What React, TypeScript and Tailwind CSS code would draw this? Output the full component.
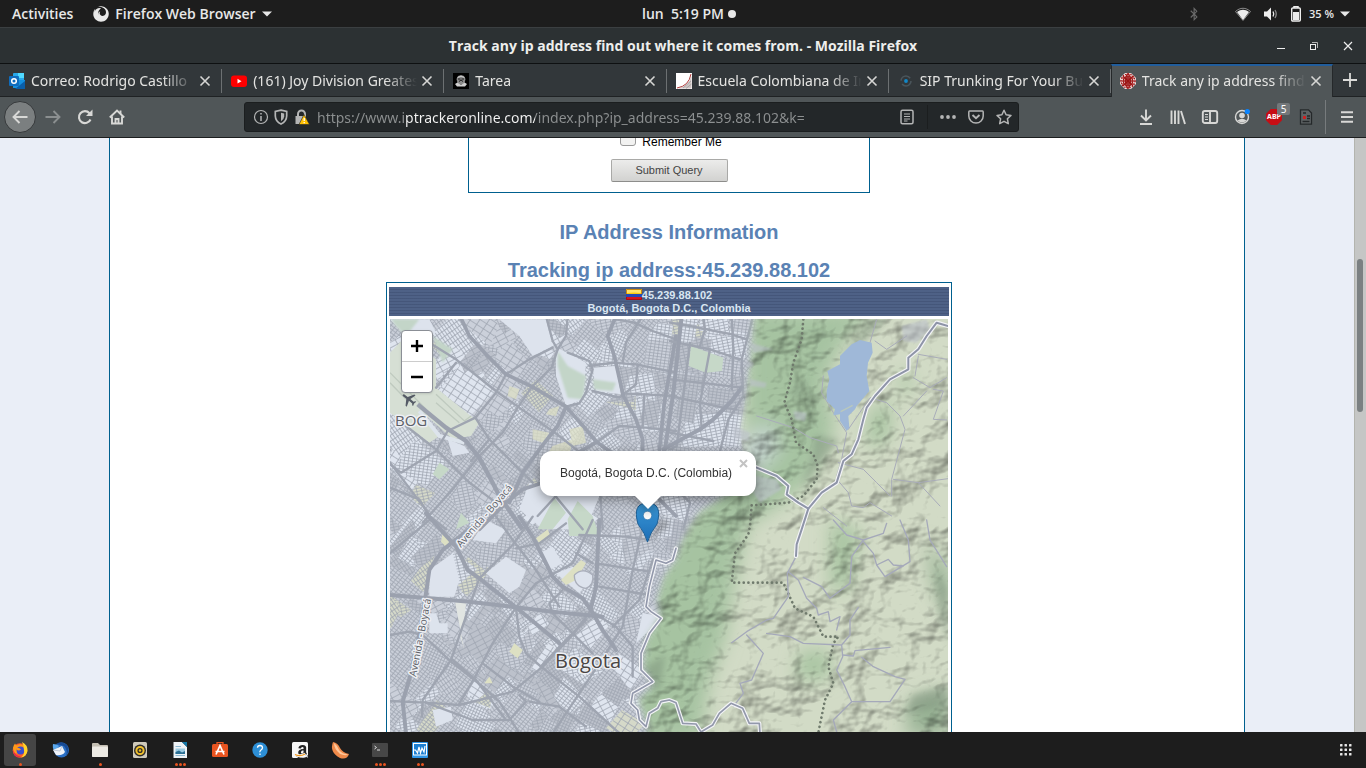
import type { ReactNode } from "react";
import { FaAmazon, FaBluetoothB, FaFirefox } from "react-icons/fa";

/* ---------- desktop top bar ---------- */

function TopBar() {
  return (
    <header className="grid h-[27px] shrink-0 grid-cols-3 items-center bg-[#1d1d1d] font-['Open_Sans','Noto_Sans',sans-serif] text-[14px] font-semibold leading-5 text-[#e8e8e8]">
      <div className="flex items-center">
        <button className="ml-3">Activities</button>
        <button className="ml-5 flex items-center gap-[6px]">
          <FaFirefox className="h-4 w-4" />
          <span>Firefox Web Browser</span>
          <Caret />
        </button>
      </div>
      <button className="flex items-center justify-center gap-1 pl-3">
        <span className="whitespace-pre">lun  5:19 PM</span>
        <span className="h-2 w-2 rounded-full bg-[#e8e8e8]" />
      </button>
      <button aria-label="System menu" className="flex items-center justify-end pr-4">
        <FaBluetoothB className="mr-9 h-[14px] w-[10px] text-[#6a6a6a]" />
        <svg className="mr-3 h-4 w-4" viewBox="0 0 16 16">
          <path d="M.5 5.5C5 1.200 11 1.200 15.500 5.500L8 14.500Z" fill="none" stroke="#8a8a8a" strokeWidth="1" />
          <path d="M2 6C6 3 10 3 14 6L8 14Z" fill="#eee" />
        </svg>
        <svg className="mr-3 h-4 w-4" viewBox="0 0 16 16">
          <path d="M1 5.500H4L8 1.500V14.500L4 10.500H1Z" fill="#eee" />
          <path d="M10 5.500Q11.500 8 10 10.500" fill="none" stroke="#eee" strokeWidth="1.300" />
          <path d="M12 4Q14.500 8 12 12" fill="none" stroke="#8a8a8a" strokeWidth="1.300" />
        </svg>
        <svg className="mr-2 h-4 w-[10px]" viewBox="0 0 10 16">
          <path d="M3 2V.8H7V2" fill="none" stroke="#eee" strokeWidth="1.500" />
          <rect x=".7" y="2" width="8.600" height="13" rx="1" fill="none" stroke="#eee" strokeWidth="1.400" />
          <rect x="2" y="6" width="6" height="8" fill="#eee" />
        </svg>
        <span className="mr-[6px] text-[11px]">35 %</span>
        <Caret />
      </button>
    </header>
  );
}

function Caret() {
  return (
    <svg className="h-[6px] w-[10px]" viewBox="0 0 10 6">
      <path d="M0 .5H10L5 5.500Z" fill="#e8e8e8" />
    </svg>
  );
}

function TitleBar() {
  return (
    <div className="grid h-[37px] shrink-0 grid-cols-[1fr_auto_1fr] items-center border-t border-b border-t-[#3b3f41] border-b-[#0e1011] bg-[#2c3133] text-[#eeeeec]">
      <span />
      <h1 className="font-['Open_Sans','Noto_Sans',sans-serif] text-[14px] leading-5 font-bold">
        Track any ip address find out where it comes from. - Mozilla Firefox
      </h1>
      <div className="flex items-center justify-end gap-6 pr-[13px]">
        <button aria-label="Minimize" className="h-3 w-2">
          <svg className="h-3 w-2" viewBox="0 0 8 12">
            <path d="M0 8.500H8" stroke="#eee" />
          </svg>
        </button>
        <button aria-label="Restore">
          <svg className="h-[10px] w-[10px]" viewBox="0 0 10 10" fill="none">
            <path d="M3 1.500H8.500V7" stroke="#b5b5b5" />
            <rect x="1.500" y="3.500" width="5" height="5" stroke="#eee" />
          </svg>
        </button>
        <button aria-label="Close window">
          <svg className="h-[10px] w-[10px]" viewBox="0 0 10 10">
            <path d="M1 1L9 9M9 1L1 9" stroke="#eee" strokeWidth="1.200" />
          </svg>
        </button>
      </div>
    </div>
  );
}

/* ---------- tabs ---------- */

const tabIcons: Record<string, ReactNode> = {
  outlook: (
    <>
      <rect x="4" y="0" width="11" height="9" rx="1" fill="#28a8ea" />
      <rect x="9" y="0" width="6" height="5" fill="#50d9ff" />
      <path d="M4 7L16 7V15H4Z" fill="#1490df" />
      <path d="M6 16L16 8V16Z" fill="#0a5ea8" />
      <rect x="0" y="3" width="10" height="10" rx="1" fill="#0f6cbd" />
      <circle cx="5" cy="8" r="2.300" fill="none" stroke="#fff" strokeWidth="1.500" />
    </>
  ),
  youtube: (
    <>
      <rect x="0" y="2.500" width="16" height="11.500" rx="3" fill="#f00" />
      <path d="M6.500 5.800L10.500 8.200L6.500 10.600Z" fill="#fff" />
    </>
  ),
  crest: (
    <>
      <rect width="16" height="16" fill="#000" />
      <path d="M8 2L11 3L12.500 6L11.500 10L8 12L4.500 10L3.500 6L5 3Z" fill="#8a8a8a" />
      <path d="M2 11L4.500 9.500L8 12L11.500 9.500L14 11L12 13.500H4Z" fill="#cfcfcf" />
      <path d="M5 6H7.500M8.500 6H11M6 8.500L8 7L10 8.500" stroke="#1a1a1a" strokeWidth="1" fill="none" />
      <path d="M4.500 4.500L8 3.200L11.500 4.500" stroke="#e2e2e2" strokeWidth=".8" fill="none" />
    </>
  ),
  school: (
    <>
      <rect width="16" height="16" fill="#fff" />
      <path d="M2 15.500Q13 13 15.500 3V15.500Z" fill="#cfc4c4" />
      <path d="M1 15Q13 13 15 1" fill="none" stroke="#b03a3a" strokeWidth="1" />
      <path d="M7 15L15 8M10 15.500L15.500 11" stroke="#999" strokeWidth=".7" />
    </>
  ),
  sip: (
    <>
      <circle cx="8" cy="8" r="5" fill="none" stroke="#4a555b" strokeWidth="1.600" strokeDasharray="12 3.700" />
      <circle cx="8" cy="8" r="1.900" fill="#1288c8" />
    </>
  ),
  globe: (
    <>
      <path d="M5 0H11L16 5V11L11 16H5L0 11V5Z" fill="#eddede" />
      <g fill="none" stroke="#a11414" strokeWidth="1.100">
        <circle cx="8" cy="8" r="7" strokeDasharray="1.500 1.200" />
        <circle cx="8" cy="8" r="4.800" />
        <ellipse cx="8" cy="8" rx="2.400" ry="7" />
        <path d="M8 0V16M0 8H16M1.500 5H14.500M1.500 11H14.500M3 3L13 13M13 3L3 13" />
      </g>
      <circle cx="8" cy="8" r="4" fill="#8e0d0d" fillOpacity=".35" />
    </>
  ),
};

const tabs = [
  { icon: "outlook", title: "Correo: Rodrigo Castillo" },
  { icon: "youtube", title: "(161) Joy Division Greatest Hits" },
  { icon: "crest", title: "Tarea" },
  { icon: "school", title: "Escuela Colombiana de Ingeniería" },
  { icon: "sip", title: "SIP Trunking For Your Business" },
  { icon: "globe", title: "Track any ip address find out", active: true },
];

function TabStrip() {
  return (
    <div className="flex h-[33px] shrink-0 bg-[#32373a]" role="tablist">
      {tabs.map((tab) => (
        <div
          key={tab.icon}
          role="tab"
          aria-selected={!!tab.active}
          className={
            tab.active
              ? "flex min-w-0 flex-1 items-center border-x border-t-2 border-x-[#25282a] border-t-[#215d9c] bg-[#505658] pr-[10px] pb-px pl-2"
              : "relative flex min-w-0 flex-1 items-center border-b border-b-[#1f2224] pt-[2px] pr-[11px] pl-[9px] after:absolute after:top-[5px] after:right-0 after:h-6 after:w-px after:bg-[#6c7072]"
          }
        >
          <svg className="mr-[6px] h-4 w-4 shrink-0" viewBox="0 0 16 16">
            {tabIcons[tab.icon]}
          </svg>
          <span className="min-w-0 flex-1 overflow-hidden text-[14px] leading-5 whitespace-nowrap text-[#e4e4e2] [mask-image:linear-gradient(to_right,#000_calc(100%-32px),transparent)]">
            {tab.title}
          </span>
          <button aria-label={`Close ${tab.title}`} className="ml-1 shrink-0">
            <svg className="h-3 w-3" viewBox="0 0 12 12">
              <path d="M1.500 1.500L10.500 10.500M10.500 1.500L1.500 10.500" stroke="#d6d6d4" strokeWidth="1.600" />
            </svg>
          </button>
        </div>
      ))}
      <button aria-label="New tab" className="flex w-[33px] shrink-0 items-center justify-center border-b border-[#1f2224]">
        <svg className="h-4 w-4" viewBox="0 0 16 16">
          <path d="M8 1V15M1 8H15" stroke="#dcdcda" strokeWidth="1.800" />
        </svg>
      </button>
    </div>
  );
}

/* ---------- navigation toolbar ---------- */

function ToolButton({ label, children, className = "" }: { label: string; children: ReactNode; className?: string }) {
  return (
    <button aria-label={label} className={`relative flex h-8 w-8 shrink-0 items-center justify-center ${className}`}>
      <svg className="h-4 w-4 overflow-visible" viewBox="0 0 16 16" fill="none" stroke="#d8d8d6" strokeWidth="1.900">
        {children}
      </svg>
    </button>
  );
}

function UrlIcon({ children }: { children: ReactNode }) {
  return (
    <svg className="h-4 w-4 shrink-0 overflow-visible" viewBox="0 0 16 16" fill="none" stroke="#b4b5b5" strokeWidth="1.500">
      {children}
    </svg>
  );
}

function Toolbar() {
  return (
    <nav className="flex h-[41px] shrink-0 items-center border-b border-[#1c1e1f] bg-[#505658] pr-[3px] pl-1">
      <ToolButton label="Back" className="mr-px rounded-full border border-[#36393b] bg-[#7b7f80]">
        <path d="M15.500 8H1.500M7.500 2L1.500 8L7.500 14" />
      </ToolButton>
      <ToolButton label="Forward">
        <path d="M.5 8H14.500M8.500 2L14.500 8L8.500 14" stroke="#8b8f90" />
      </ToolButton>
      <ToolButton label="Reload">
        <path d="M13.500 10.500A6 6 0 1 1 12.500 4.200" strokeWidth="2.100" />
        <path d="M15.500 .5V7H9Z" fill="#d8d8d6" stroke="none" />
      </ToolButton>
      <ToolButton label="Home">
        <path d="M.8 8.500L8 1.500L15.200 8.500M3 7.500V14.500H13V7.500" />
        <path d="M6.500 14.500V10H9.500V14.500M11.500 5V1.500" />
      </ToolButton>

      <div className="mx-[111px] flex h-[30px] min-w-0 flex-1 items-center rounded-[3px] border border-[#1b1e1f] bg-[#232729] pr-[6px] pl-2">
        <UrlIcon>
          <circle cx="8" cy="8" r="6.500" strokeWidth="1.200" />
          <path d="M8 7V12M8 4V5.600" />
        </UrlIcon>
        <span className="w-1" />
        <UrlIcon>
          <path d="M8 1.200L13.700 2.500V7Q13.500 12.500 8 15Q2.500 12.500 2.300 7V2.500Z" strokeWidth="1.700" />
          <path d="M8 3.800L11.200 4.600V7.500Q11 10.500 8 12.200Z" fill="#b4b5b5" stroke="none" />
        </UrlIcon>
        <span className="w-1" />
        <UrlIcon>
          <path d="M5 8V5A3.500 3.500 0 0 1 12 5V8" strokeWidth="2" />
          <rect x="2.500" y="7" width="10" height="8" fill="#b4b5b5" stroke="none" />
          <path d="M11 5.500L16.500 15.500H6Z" fill="#ffbf00" stroke="#232729" strokeWidth=".6" />
          <path d="M11.200 9V12M11.200 13V14.300" stroke="#fff" strokeWidth="1.300" />
        </UrlIcon>
        <input
          aria-label="Address"
          defaultValue="https://www.iptrackeronline.com/index.php?ip_address=45.239.88.102&k="
          className="mx-2 min-w-0 flex-1 bg-[linear-gradient(to_right,#8d9091_88px,#f5f5f5_88px,#f5f5f5_218px,#8d9091_218px)] bg-clip-text pt-px text-[14px] leading-5 text-transparent outline-none"
        />
        <button aria-label="Reader view">
          <UrlIcon>
            <rect x="2" y="1.200" width="12" height="13.600" rx="1.500" />
            <path d="M5 5H11M5 7.500H11M5 10H11M5 12H8.500" strokeWidth="1.200" />
          </UrlIcon>
        </button>
        <span className="mr-3 ml-3 h-6 w-px bg-[#1b1e1f]" />
        <button aria-label="Page actions">
          <UrlIcon>
            <g fill="#b4b5b5" stroke="none">
              <circle cx="2" cy="8" r="1.900" />
              <circle cx="8" cy="8" r="1.900" />
              <circle cx="14" cy="8" r="1.900" />
            </g>
          </UrlIcon>
        </button>
        <button aria-label="Save to Pocket" className="mx-3">
          <UrlIcon>
            <path d="M1.500 2H14.500Q15.200 2 15.200 3V7A7.200 7 0 0 1 .8 7V3Q.8 2 1.500 2Z" />
            <path d="M4.500 6L8 9.300L11.500 6" strokeWidth="1.900" />
          </UrlIcon>
        </button>
        <button aria-label="Bookmark this page">
          <UrlIcon>
            <path d="M8 1.300L10.100 5.800L15 6.400L11.400 9.800L12.300 14.700L8 12.300L3.700 14.700L4.600 9.800L1 6.400L5.900 5.800Z" strokeLinejoin="round" />
          </UrlIcon>
        </button>
      </div>

      <ToolButton label="Downloads">
        <path d="M8 .5V11M3 6.500L8 11.500L13 6.500M2 15H14" />
      </ToolButton>
      <ToolButton label="Library">
        <path d="M1.500 1.500V15M5 1.500V15M8.500 1.500V15M11 2L15 15" />
      </ToolButton>
      <ToolButton label="Sidebars">
        <rect x=".8" y="2" width="14.400" height="12" rx="2" />
        <path d="M8 2V14" />
        <path d="M3 5.500H6M3 8H6M3 10.500H6" strokeWidth="1.200" />
      </ToolButton>
      <ToolButton label="Account">
        <circle cx="8" cy="8" r="6.500" strokeWidth="1.400" />
        <circle cx="8" cy="6.500" r="2.800" fill="#d8d8d6" stroke="none" />
        <path d="M3.500 11.500Q8 8 12.500 11.500Q8 15.500 3.500 11.500Z" fill="#d8d8d6" stroke="none" />
        <circle cx="13.300" cy="2.500" r="2.600" fill="#0a84ff" stroke="none" />
      </ToolButton>
      <button aria-label="Adblock Plus" className="relative flex h-8 w-8 shrink-0 items-center justify-center">
        <span className="flex h-4 w-4 items-center justify-center bg-[#c70d14] text-[7px] font-bold text-white [clip-path:polygon(30%_0,70%_0,100%_30%,100%_70%,70%_100%,30%_100%,0_70%,0_30%)]">
          ABP
        </span>
        <span className="absolute top-[2px] right-0 flex h-3 w-[13px] items-center justify-center rounded-[2px] bg-[#73777a] text-[10px] leading-3 text-white">5</span>
      </button>
      <ToolButton label="Page tools">
        <path d="M2.500 .8H10.500L13.500 4V15.200H2.500Z" fill="#5e6365" stroke="#24282a" strokeWidth="1.300" />
        <path d="M5 4H8M9 7H12M9 9.500H12M4.500 12.500H11.500" stroke="#24282a" strokeWidth="1.300" />
        <rect x="5" y="7" width="3" height="3" fill="#c22" stroke="none" />
      </ToolButton>
      <span className="mr-[5px] ml-[3px] h-[34px] w-px bg-[#777b7d]" />
      <ToolButton label="Menu">
        <path d="M2 3.200H14M2 8H14M2 12.800H14" />
      </ToolButton>
    </nav>
  );
}

/* ---------- map ---------- */

function random(seed: number) {
  let s = seed;
  return () => {
    s = (s * 16807) % 2147483647;
    return s / 2147483647;
  };
}

const streetGrids = [
  { id: "g0", angle: 38, w: 4, h: 3 },
  { id: "g1", angle: 55, w: 3, h: 3 },
  { id: "g2", angle: -35, w: 3, h: 5 },
  { id: "g3", angle: 8, w: 4, h: 3 },
  { id: "g4", angle: 25, w: 3, h: 3 },
  { id: "g5", angle: -12, w: 5, h: 3 },
  { id: "g6", angle: 33, w: 8, h: 6 },
  { id: "g7", angle: -28, w: 9, h: 5 },
];

function makeDistricts() {
  const r = random(4217);
  const list: { d: string; fill: string; ground: string }[] = [];
  for (let i = 0; i < 300; i++) {
    const cx = 385 + r() * 370;
    const cy = 315 + r() * 420;
    const a = (cx > 610 && cy < 560 ? 8 : 40) * (Math.PI / 180);
    const w = 5 + r() * 17;
    const h = 5 + r() * 14;
    const corner = (x: number, y: number) => {
      const jx = x + (r() - 0.5) * 9;
      const jy = y + (r() - 0.5) * 9;
      return `${Math.round(cx + jx * Math.cos(a) - jy * Math.sin(a))} ${Math.round(cy + jx * Math.sin(a) + jy * Math.cos(a))}`;
    };
    const pick = r();
    const fill = cx > 610 && cy < 580 ? (pick < 0.5 ? "g3" : "g5") : streetGrids[Math.floor(pick * 8)].id;
    const tone = r();
    list.push({
      d: `M${corner(-w, -h)}L${corner(w, -h)}L${corner(w, h)}L${corner(-w, h)}Z`,
      fill: `url(#${fill})`,
      ground: tone < 0.35 ? "#dfe5ef" : tone < 0.4 ? "#d5d9c9" : tone < 0.7 ? "#cbd0da" : "#bcc1cb",
    });
  }
  return list;
}

const districts = makeDistricts();

const northWestRoads = [
  "M222 0L250 60L300 115L360 175L438 212L540 272L600 340L632 378L720 440L790 520L870 600",
  "M540 272L515 330L460 400L410 470L370 560",
  "M632 378L540 430L470 500L410 520L360 560L280 640",
  "M870 60L835 260L820 405L800 520L780 640",
  "M690 0L665 60L685 120L712 240L750 310L770 370L770 450",
];
const northWestStreets = [
  "M480 0L500 75L515 100L497 155L438 212L395 275L350 350L275 425L200 520L110 620",
  "M500 95L430 130L360 175L330 230L268 305L310 370L400 460L440 500",
  "M130 80L210 130L330 225L400 275L520 360L620 440",
  "M150 215L210 140",
  "M12 445L45 470L150 405L185 345L268 305",
  "M515 100L540 60L545 0",
  "M545 110L610 135L620 160L600 230L580 262L540 272",
  "M610 150L680 140L750 145L870 170",
  "M620 225L700 245L750 205L755 145",
  "M770 0L720 80L710 140",
  "M690 10L745 20L800 45L870 70",
  "M632 378L700 330L780 335L870 345",
  "M712 232L870 240",
  "M775 235L770 330",
  "M12 515L100 550L130 600L180 640",
  "M12 440L130 595",
  "M60 330L150 400L250 500L330 560",
  "M310 370L255 435",
  "M455 600L510 540",
  "M500 530L590 640",
  "M640 500L650 640",
];
const northEastStreets = [
  "M60 80L20 390L0 400",
  "M185 0L190 100L185 220",
  "M0 75L120 100L210 130",
  "M0 190L90 200L215 215",
  "M0 240L160 275L200 280",
  "M120 100L90 260L95 340",
  "M0 350L130 375",
  "M100 0L105 40L90 90",
  "M250 0L215 130L220 240L175 310L150 405",
  "M0 20L60 30L185 55L230 70",
  "M0 500L60 560L40 640",
];
const southWestRoads = [
  "M12 225L130 235L250 245L390 262L500 275L650 290",
  "M400 -10L440 50L500 170L530 200L590 235L615 270L650 330L690 390",
  "M260 20L170 90L130 150L120 220L105 320L75 460L50 545L60 640",
  "M640 0L630 200L615 265",
  "M120 -20L210 80L245 150L280 175L390 262L520 370",
];
const southWestStreets = [
  "M440 -10L380 75L280 175L250 260L195 420L110 540L108 590",
  "M330 -10L380 60L450 150L520 260",
  "M390 262L400 350L420 400L465 440L580 530L700 640",
  "M390 262L320 370L265 475L220 550",
  "M12 345L70 335L110 345L195 425L290 500L340 545L400 640",
  "M12 543L120 548L220 555L320 530L380 515L470 440L560 345L615 270",
  "M390 262L450 190L560 130L620 0",
  "M390 85L460 70L540 10",
  "M580 45L720 50L790 60",
  "M630 130L790 155",
  "M640 200L790 225",
  "M770 20L740 150L710 320L640 430L500 640",
  "M610 270L690 320L740 380L740 470",
  "M430 545L520 560L600 620",
  "M12 100L130 0",
  "M120 548L260 600L370 600L420 545L400 525",
  "M200 420L270 480L360 600",
  "M530 210L490 250L500 280L550 330L620 400",
  "M570 100L620 130",
  "M290 430L380 500L460 545",
  "M600 300L530 370L465 440",
  "M680 320L760 240L800 120",
];

const ringRoads = [
  "M834 30L800 20L770 60L745 100L715 125L715 160L660 190L615 240L590 275L580 310L565 370L545 415L520 435L500 500L455 530L415 578L395 640L380 685L378 720",
  "M230 445L260 455L320 480L355 510L350 535L385 560L415 578",
];
const southRing =
  "M870 85L860 120L840 130L810 120L800 160L790 200L780 260L795 275L825 295L790 340L765 400L765 450L800 485L740 520L735 550L755 570L760 600L780 620L790 580L815 565L825 545L850 540L870 548L890 610L930 612L945 636L980 615L1000 580L1035 550L1070 565L1090 610L1120 610L1122 640";

const countryRoads = [
  "M600 80L620 10M615 75L650 100L710 60M745 115L830 130M730 185L780 215L830 185M745 120L735 180",
  "M460 180L455 230L490 290L530 350L515 430L500 480M535 340L600 245L650 260L690 300L705 340L665 490L665 540",
  "M260 300L370 335L420 365L500 390L505 410M790 220L820 225L790 310L830 312M670 490L745 500L834 488M745 500L810 570",
  "M505 440L580 460L620 500L660 540M505 495L535 530L545 570L580 575L600 560L665 600M460 575L530 630M700 300L770 225",
];
const southCountryRoads = [
  "M355 155L385 180L410 235L440 265L445 285L475 275L480 305L510 290L500 330",
  "M378 110L352 160L355 230L310 295L290 300L230 335L185 368M230 345L280 400L245 480L210 490L220 520L190 560",
  "M290 340L360 350L400 370L515 375L518 410L500 450L525 500L545 545L490 600L500 636M515 375L540 345L540 300L565 262",
  "M518 405L550 408L555 392L660 382M575 412L610 440L675 470L705 478L660 545L545 545",
  "M490 0L530 45L580 60L545 110L540 190L480 235L455 200L400 172M580 60L640 40L650 10",
  "M580 65L610 100L620 135L645 170L720 125L715 60L690 0M620 135L655 118L670 135L700 138M770 0L780 60L830 140",
];

const municipalBoundary =
  "M400 10L395 70L370 140L360 200L343 260L365 310L378 380L430 415L443 450L440 490L400 540L355 560L245 568L240 630L235 655L195 712L185 800L340 800L375 877L430 902L460 962L505 962L490 982L475 1052L490 1102L465 1152L445 1250";

const mountains =
  "M754 315L751 350L746 395L740 430L743 455L747 480L718 500L699 512L690 525L680 545L676 560L664 576L657 600L660 617L646 640L643 668L654 684L638 700L648 726L644 745H960V305H754Z";

function Roads({ paths, width, color }: { paths: string[]; width: number; color: string }) {
  return (
    <g fill="none" stroke={color} strokeWidth={width} strokeLinejoin="round" strokeLinecap="round">
      {paths.map((d) => (
        <path key={d} d={d} />
      ))}
    </g>
  );
}

function MapLabel({ children, size, transform, color }: { children: string; size: number; transform: string; color: string }) {
  return (
    <text
      transform={transform}
      fontSize={size}
      fill={color}
      stroke="#eef0f4"
      strokeWidth="3"
      strokeLinejoin="round"
      paintOrder="stroke"
      className="font-['Open_Sans','Noto_Sans',sans-serif]"
    >
      {children}
    </text>
  );
}

function TerrainMap() {
  return (
    <svg className="block h-[413px] w-full" viewBox="390 319 558 413" preserveAspectRatio="xMidYMid slice" role="img" aria-label="Map of Bogota">
      <defs>
        {streetGrids.map((g) => (
          <pattern key={g.id} id={g.id} width={g.w} height={g.h} patternUnits="userSpaceOnUse" patternTransform={`rotate(${g.angle})`}>
            <path d={`M0 0H${g.w}M0 0V${g.h}`} stroke="#a0a6b2" strokeWidth="1.600" />
          </pattern>
        ))}
        <filter id="relief" x="0" y="0" width="1" height="1" colorInterpolationFilters="sRGB">
          <feTurbulence type="fractalNoise" baseFrequency="0.02 0.026" numOctaves="4" seed="11" />
          <feDiffuseLighting surfaceScale="11" diffuseConstant="1.200" lightingColor="#fff">
            <feDistantLight azimuth="225" elevation="56" />
          </feDiffuseLighting>
        </filter>
        <filter id="soft" x="-30%" y="-30%" width="160%" height="160%">
          <feGaussianBlur stdDeviation="9" />
        </filter>
        <filter id="edge" x="-20%" y="-20%" width="140%" height="140%">
          <feGaussianBlur stdDeviation="3" />
        </filter>
        <mask id="hills" maskUnits="userSpaceOnUse" x="380" y="310" width="580" height="430">
          <path d={mountains} fill="#fff" filter="url(#edge)" />
        </mask>
        <linearGradient id="pin" x1="0" y1="0" x2="0" y2="1">
          <stop offset="0" stopColor="#3b9ad9" />
          <stop offset="1" stopColor="#1c6cb5" />
        </linearGradient>
      </defs>

      <rect x="380" y="310" width="580" height="430" fill="#c9ced8" />
      <rect x="380" y="310" width="380" height="430" fill="url(#g0)" />
      {districts.map((p, i) => (
        <g key={i}>
          <path d={p.d} fill={p.ground} />
          <path d={p.d} fill={p.fill} />
        </g>
      ))}

      {/* open ground, airport and parks */}
      <g transform="translate(386 316) scale(.33333)">
        <g fill="#dde3ed">
          <path d="M12 10H130L150 50L100 90L60 60Z" />
          <path d="M340 10H480L500 90L440 120L400 60Z" />
          <path d="M430 500L640 540L600 640H470L400 580Z" />
          <path d="M510 95L545 110L600 140L590 250L540 270L510 180Z" />
          <path d="M620 155L690 150L705 235L630 225Z" />
          <path d="M185 370L235 390L250 410L200 420Z" />
        </g>
        <path d="M12 110L60 60L150 130V215L280 320L255 360L200 370L100 280L160 360L130 380L12 290Z" fill="#d6dfd4" />
        <path d="M12 170L120 280M150 235L235 315L255 300M12 200L60 250M150 260L220 320" stroke="#bfcabf" strokeWidth="4" fill="none" />
        <path d="M100 285L160 360L235 380" stroke="#dde4ec" strokeWidth="12" fill="none" />
        <g fill="#c3d5c8" filter="url(#edge)">
          <path d="M515 105L545 150L600 180L590 250L545 245L515 150Z" />
          <path d="M15 10H100L60 60L30 30Z" />
          <path d="M140 60L200 100L170 140Z" />
          <path d="M620 190L690 200L680 225L625 220Z" />
        </g>
        <g fill="#c6d8c8">
          <path d="M505 545L540 590L500 640H455ZM575 555L620 600L640 660H550L545 610Z" />
          <path d="M160 440L190 460L160 490L140 475ZM225 590L250 620L210 640Z" />
          <path d="M915 90L1012 125L1008 165L960 170L908 150Z" />
        </g>
        <g fill="#dcdfc4" opacity=".75">
          <path d="M490 280L520 270L510 300L480 295ZM440 340L490 350L470 380L440 370ZM550 340L590 330L600 380L560 390ZM500 390L560 370L550 420H480ZM370 210L400 220L390 250L365 240Z" />
        </g>
      </g>
      <g transform="translate(386 520) scale(.33333)">
        <g fill="#dde3ed">
          <path d="M130 150L200 100L220 180L205 230H130Z" />
          <path d="M300 160L360 110L420 150L400 200L370 220Z" />
          <path d="M460 100L500 80L530 130L490 150ZM510 160L560 140L610 180L580 220Z" />
          <path d="M300 0L360 30L330 70L260 60Z" />
          <path d="M140 570L195 560L200 600L150 620ZM160 310H185V340H130V280H150Z" />
          <path d="M770 280L825 290L790 330L750 370Z" />
        </g>
        <g fill="#dde0c3">
          <path d="M170 40L195 55L180 80L165 65ZM485 28L492 45L460 70L450 55ZM525 180L585 120L600 130L570 180L540 195ZM385 370L410 390L395 415L370 395ZM310 470L320 490L295 490Z" />
        </g>
        <path d="M565 165Q590 140 620 165Q625 195 600 205Q565 200 565 165" fill="#dde3ed" stroke="#a9aeba" strokeWidth="4" />
        <path d="M205 235L240 250L235 300L220 340L235 390L225 340Z" fill="#e1e5e2" />
      </g>

      {/* road network */}
      <g transform="translate(386 316) scale(.33333)">
        <Roads paths={northWestStreets} width={7} color="#9fa5b1" />
        <Roads paths={northWestRoads} width={11} color="#9ba1ae" />
        <path d="M95 265L180 335L240 375L280 425L320 500L340 540L410 640" fill="none" stroke="#9ba1ae" strokeWidth="13" />
      </g>
      <g transform="translate(670 316) scale(.33333)">
        <Roads paths={northEastStreets} width={7} color="#9fa5b1" />
        <Roads paths={["M35 0L10 230L-15 400", "M-20 400L90 340L130 310L185 255L215 215"]} width={12} color="#9ba1ae" />
      </g>
      <g transform="translate(386 520) scale(.33333)">
        <Roads paths={southWestStreets} width={7} color="#9fa5b1" />
        <Roads paths={southWestRoads} width={12} color="#9ba1ae" />
      </g>

      {/* eastern hills */}
      <g mask="url(#hills)">
        <path d={mountains} fill="#d2dbc6" />
        <g filter="url(#soft)">
          <path d="M745 310H880L845 340L825 380L835 430L810 480L780 505L748 525L735 580L725 640L710 680L700 740H630V640L660 560L700 500L745 450Z" fill="#a6c3a1" />
          <path d="M870 410L890 400L892 430L878 450L866 440ZM830 520L860 530L850 590L830 590ZM800 650H830V680H795ZM895 370L915 380L905 400Z" fill="#a9c5a2" />
          <path d="M925 540L950 570V620L935 590ZM910 700L950 690V735H905Z" fill="#98b294" />
          <path d="M742 440L770 420L780 450L760 470L740 480Z" fill="#c6d6cf" />
        </g>
        <rect x="630" y="310" width="330" height="430" filter="url(#relief)" opacity=".5" className="mix-blend-multiply" />
        <g fill="#6f8470" opacity=".4" filter="url(#edge)">
          <path d="M848 350L870 320L890 318L860 345L842 356ZM815 435L840 440L815 470L800 490L812 455ZM790 390L810 378L795 400ZM640 670L665 655L660 690L645 688ZM936 570L948 590V645L938 610ZM912 695L948 685V705L905 715Z" />
        </g>
      </g>

      <g transform="translate(670 316) scale(.33333)">
        <g fill="#bcc1cb" opacity=".6" filter="url(#edge)">
          <path d="M695 30L770 10L780 40L740 80L700 75ZM240 80L310 100L250 110ZM225 135L250 140L245 155L225 150ZM240 190L290 200L285 215L240 210ZM370 285L410 290L405 315L375 310ZM255 480L320 490L335 520L270 560L250 530ZM190 330L240 350L235 375L190 365Z" />
        </g>
        <Roads paths={countryRoads} width={3} color="#a9acb9" />
        <path
          d="M570 72L605 80L608 110L594 140L590 180L598 225L560 270L555 280L535 300L538 335L530 345L510 315L510 295L490 298L495 280L470 255L470 225L478 190L472 165L510 145L510 120L545 85Z"
          fill="#9fb8d8"
        />
        <path d="M512 287L548 268" stroke="#b9c8bd" strokeWidth="4" />
        <path d={municipalBoundary} fill="none" stroke="#6f7a6c" strokeWidth="8" strokeLinecap="round" strokeDasharray=".1 14" />
      </g>
      <g transform="translate(670 520) scale(.33333)">
        <Roads paths={southCountryRoads} width={4} color="#a5a9ba" />
      </g>
      <g transform="translate(670 316) scale(.33333)">
        <Roads paths={ringRoads} width={13} color="#f3f4f7" />
        <Roads paths={ringRoads} width={6} color="#8e94a8" />
      </g>
      <g transform="translate(386 520) scale(.33333)">
        <Roads paths={[southRing]} width={12} color="#f3f4f7" />
        <Roads paths={[southRing]} width={5} color="#9298ab" />
      </g>

      <path
        transform="translate(409 399) rotate(-52) scale(.75) translate(-12 -12)"
        d="M21 16v-2l-8-5V3.500a1.500 1.500 0 0 0-3 0V9l-8 5v2l8-2.500V19l-2 1.500V22l3.500-1 3.500 1v-1.500L13 19v-5.500l8 2.500z"
        fill="#555b66"
      />
      <MapLabel size={15} transform="translate(395 426)" color="#5c6068">
        BOG
      </MapLabel>
      <MapLabel size={20} transform="translate(555 668)" color="#4a4644">
        Bogota
      </MapLabel>
      <MapLabel size={10} transform="translate(461 548) rotate(-49)" color="#5c6068">
        Avenida - Boyacá
      </MapLabel>
      <MapLabel size={10} transform="translate(416 677) rotate(-79)" color="#5c6068">
        Avenida - Boyacá
      </MapLabel>

      <path d="M648 541L662 520Q672 518 668 526Z" fill="#222" opacity=".35" filter="url(#edge)" />
      <path d="M647.500 542Q645 533 638 524Q632 503 647.500 503Q663 503 657 524Q650 533 647.500 542Z" fill="url(#pin)" stroke="#1e6198" strokeWidth="1" />
      <circle cx="647.500" cy="515.500" r="4.200" fill="#fff" stroke="#2a6ea6" strokeWidth=".6" />
    </svg>
  );
}

function MapPanel() {
  return (
    <section className="w-[566px] border border-[#00608f] px-[2px] pt-1">
      <div className="bg-[#4e6186] bg-[repeating-linear-gradient(to_bottom,transparent_0_2px,rgba(20,30,60,0.16)_2px_3px)] pt-[2px] pb-px text-center text-[11px] leading-[13px] font-bold text-[#d9e6f2]">
        <div className="flex items-start justify-center">
          <svg className="h-[11px] w-4" viewBox="0 0 16 11">
            <rect width="16" height="11" fill="#f8c810" />
            <rect y="5" width="16" height="3" fill="#2447b5" />
            <rect y="8" width="16" height="3" fill="#d3141c" />
            <path d="M1 1H15V4Q8 3 1 4Z" fill="#ffe46a" />
            <path d="M.5 5V.5H15.500V5" fill="none" stroke="#c98a10" />
            <path d="M.5 8V10.500H15.500V8" fill="none" stroke="#a80d14" />
          </svg>
          45.239.88.102
        </div>
        <div>Bogotá, Bogota D.C., Colombia</div>
      </div>
      <div className="relative mx-px mt-[3px] overflow-hidden">
        <TerrainMap />
        <div className="absolute top-[11px] left-[11px] flex w-8 flex-col overflow-hidden rounded-[4px] border border-[#8b8f96] bg-white shadow">
          <button aria-label="Zoom in" className="flex h-[31px] items-center justify-center border-b border-[#ccc]">
            <svg className="h-3 w-3" viewBox="0 0 12 12">
              <path d="M6 0V12M0 6H12" stroke="#000" strokeWidth="2.400" />
            </svg>
          </button>
          <button aria-label="Zoom out" className="flex h-[30px] items-center justify-center">
            <svg className="h-3 w-3" viewBox="0 0 12 12">
              <path d="M0 6H12" stroke="#000" strokeWidth="2.400" />
            </svg>
          </button>
        </div>
        <div className="absolute top-[132px] left-[150px] w-[216px] drop-shadow-[0_3px_6px_rgba(0,0,0,0.4)]">
          <div className="rounded-xl bg-white py-[14px] pl-5 text-[12px] leading-[17px] text-[#333]">Bogotá, Bogota D.C. (Colombia)</div>
          <svg className="mx-auto h-[13px] w-[26px]" viewBox="0 0 26 13">
            <path d="M0 0H26L13 13Z" fill="#fff" />
          </svg>
          <button aria-label="Close popup" className="absolute top-2 right-2">
            <svg className="h-[9px] w-[9px]" viewBox="0 0 9 9">
              <path d="M1 1L8 8M8 1L1 8" stroke="#c3c3c3" strokeWidth="2" />
            </svg>
          </button>
        </div>
      </div>
    </section>
  );
}

function WebPage() {
  return (
    <main className="flex min-h-0 flex-1 bg-[#eaeef7] font-['Liberation_Sans',Arial,sans-serif]">
      <div className="min-w-0 flex-1 overflow-hidden">
        <div className="mx-auto flex w-full max-w-[1136px] flex-col items-center border-x border-[#00608f] bg-white pr-4">
          <form className="-mt-2 flex w-[402px] flex-col items-center border-x border-b border-[#00608f] pb-[10px]" onSubmit={(e) => e.preventDefault()}>
            <label className="flex items-start gap-[6px] pl-1 text-[12px] leading-6 text-black">
              <input type="checkbox" className="h-4 w-4 appearance-none rounded-[3px] border border-[#999] bg-[#f2f2f1]" />
              <span>Remember Me</span>
            </label>
            <button className="mt-[5px] h-[23px] w-[117px] rounded-[2px] border border-[#a9a9a7] border-b-[#8d8d8b] bg-linear-to-b from-[#ececeb] to-[#d2d2d0] text-[11px] text-[#444]">
              Submit Query
            </button>
          </form>
          <h2 className="mt-[27px] text-[20px] leading-6 font-bold text-[#5a82b4]">IP Address Information</h2>
          <h2 className="mt-[14px] text-[20px] leading-6 font-bold text-[#5a82b4]">Tracking ip address:45.239.88.102</h2>
          <MapPanel />
        </div>
      </div>
      <div className="w-3 shrink-0 border-l border-[#b3b4ae] bg-[#c5c6c5] px-[2px] pt-[121px]">
        <div className="h-[153px] w-[6px] rounded-full bg-[#7b8082]" />
      </div>
    </main>
  );
}

/* ---------- dock ---------- */

const dockItems: { name: string; dots: number; active?: boolean; art: ReactNode }[] = [
  {
    name: "Firefox",
    dots: 1,
    active: true,
    art: (
      <>
        <circle cx="8" cy="8.500" r="7.300" fill="#ff5a2a" />
        <path d="M1 6Q1.500 3 3 1.500Q3.500 3 5 3.500Q9 1 12 4L8 12L2 11Z" fill="#ff9a1a" />
        <circle cx="8.500" cy="8.500" r="3.900" fill="#3a4fd0" />
        <path d="M10 0Q16 3 15.500 9Q14.500 14.500 9 15.500Q13 12 12 8Q12 4 10 0Z" fill="#ffd42a" />
        <path d="M1.500 8Q3 14 9 14.500Q6 16 3.500 14Q1 12 1.500 8Z" fill="#e6264f" />
        <path d="M4 6Q7 5 9 7.500Q7 9 5 8Z" fill="#ff9a1a" />
      </>
    ),
  },
  {
    name: "Thunderbird",
    dots: 0,
    art: (
      <>
        <circle cx="9.500" cy="8" r="7.500" fill="#2a6fc4" />
        <path d="M4 2Q10 -2 15 3Q18 9 14 14Q16 8 12 4Z" fill="#174a94" />
        <path d="M1 2Q5 2 7 4L3 9Q0 7 1 2Z" fill="#5aa6ea" />
        <path d="M1 8L10 4L13 10Q10 14 4 13Z" fill="#f0f3f8" />
        <path d="M1 8L8 9L10 4" fill="none" stroke="#b4bfd2" strokeWidth=".8" />
      </>
    ),
  },
  {
    name: "Files",
    dots: 1,
    art: (
      <>
        <path d="M0 2Q0 1 1 1H6L8 3H15Q16 3 16 4V14Q16 15 15 15H1Q0 15 0 14Z" fill="#c4bfb3" />
        <rect y="4.500" width="16" height="10.500" rx="1" fill="#eceae4" />
      </>
    ),
  },
  {
    name: "Rhythmbox",
    dots: 0,
    art: (
      <>
        <rect x="1" y="0" width="14" height="16" rx="1.500" fill="#cfcabb" />
        <circle cx="8" cy="8.500" r="6" fill="#2f2d2a" />
        <circle cx="8" cy="8.500" r="3.600" fill="none" stroke="#f0c02c" strokeWidth="2" />
        <circle cx="8" cy="8.500" r="1.200" fill="#f0c02c" />
      </>
    ),
  },
  {
    name: "Writer",
    dots: 3,
    art: (
      <>
        <path d="M1.500 0H10L15 5V16H1.500Z" fill="#eef3f7" />
        <path d="M10 0H15V5Z" fill="#1177a8" />
        <path d="M3.500 4.500H9M3.500 13.500H13" stroke="#8cb9d2" />
        <rect x="3.500" y="6.500" width="9.500" height="5.500" fill="#9ccbe2" />
        <path d="M3.500 12V10L7 8.500L10 10.500L13 9V12Z" fill="#2a6f94" />
      </>
    ),
  },
  {
    name: "Software",
    dots: 0,
    art: (
      <>
        <rect y="2" width="16" height="13" rx="1.500" fill="#e95420" />
        <path d="M5 2V.7H11V2" fill="none" stroke="#e95420" strokeWidth="1.300" />
        <path d="M4 12.500L8 3.500L12 12.500M3.500 9.500H12.500" fill="none" stroke="#fff" strokeWidth="1.700" />
      </>
    ),
  },
  {
    name: "Help",
    dots: 0,
    art: (
      <>
        <circle cx="8" cy="8" r="7.700" fill="#2d8fd6" />
        <path d="M5.500 5.800Q5.500 3.500 8 3.500T10.500 5.800Q10.500 7 9 8T8 10.200M8 11.500V13" fill="none" stroke="#fff" strokeWidth="1.300" />
      </>
    ),
  },
  {
    name: "Amazon",
    dots: 0,
    art: (
      <>
        <rect width="16" height="16" rx="1.500" fill="#f7f7f7" />
        <FaAmazon x="2.500" y="2" width="11" height="12" color="#222" />
        <path d="M2.500 12Q8 15.500 13.500 12" fill="none" stroke="#f7f7f7" strokeWidth="3" />
        <path d="M3 12.500Q8 15 13 12" fill="none" stroke="#f39a1e" strokeWidth="1.200" />
      </>
    ),
  },
  {
    name: "Clementine",
    dots: 0,
    art: (
      <>
        <path d="M1 0Q6 1 8 6Q11 11 17 12Q15 18 8 16Q-3 10 1 0Z" fill="#f08a4a" />
        <path d="M2 1Q5 3 7 8Q10 12 16 12.500Q13 14 8 12Q2 7 2 1Z" fill="#ffc79a" />
      </>
    ),
  },
  {
    name: "Terminal",
    dots: 3,
    art: (
      <>
        <rect y="1" width="16" height="14" rx="1" fill="#474747" />
        <path d="M2.500 4L4.500 5.500L2.500 7M5 8H8" stroke="#ddd" fill="none" />
      </>
    ),
  },
  {
    name: "System Monitor",
    dots: 2,
    art: (
      <>
        <rect width="16" height="16" rx="1" fill="#2f96e8" />
        <rect x="1.500" y="1.500" width="13" height="11.500" fill="#1d7fd2" stroke="#fff" />
        <path d="M2 8H3.500L5.500 11L7 5L8.500 11L10 6L12 10L13 4" stroke="#fff" fill="none" strokeWidth="1.200" />
      </>
    ),
  },
];

function Dock() {
  return (
    <footer className="flex h-9 shrink-0 items-center justify-between bg-[#1d1d1d] pr-[14px] pl-1">
      <div className="flex gap-2">
        {dockItems.map((item) => (
          <button
            key={item.name}
            aria-label={item.name}
            className={
              item.active
                ? "relative flex h-8 w-8 items-center justify-center rounded-[3px] bg-[#454545]"
                : "relative flex h-8 w-8 items-center justify-center"
            }
          >
            <svg className="h-4 w-4 overflow-visible" viewBox="0 0 16 16">
              {item.art}
            </svg>
            <span className="absolute inset-x-0 bottom-0 flex justify-center gap-px">
              {Array.from({ length: item.dots }, (_, i) => (
                <span key={i} className="h-[3px] w-[3px] rounded-full bg-[#e95420]" />
              ))}
            </span>
          </button>
        ))}
      </div>
      <button aria-label="Show applications">
        <svg className="h-3 w-3" viewBox="0 0 12 12" fill="#e6e6e6">
          {[0, 4.5, 9].map((y) => [0, 4.5, 9].map((x) => <rect key={`${x}-${y}`} x={x} y={y} width="2.500" height="2.500" rx=".5" />))}
        </svg>
      </button>
    </footer>
  );
}

export default function App() {
  return (
    <div className="flex h-screen flex-col overflow-hidden bg-[#1d1d1d] font-['Noto_Sans','Open_Sans',sans-serif]">
      <TopBar />
      <TitleBar />
      <TabStrip />
      <Toolbar />
      <WebPage />
      <Dock />
    </div>
  );
}
